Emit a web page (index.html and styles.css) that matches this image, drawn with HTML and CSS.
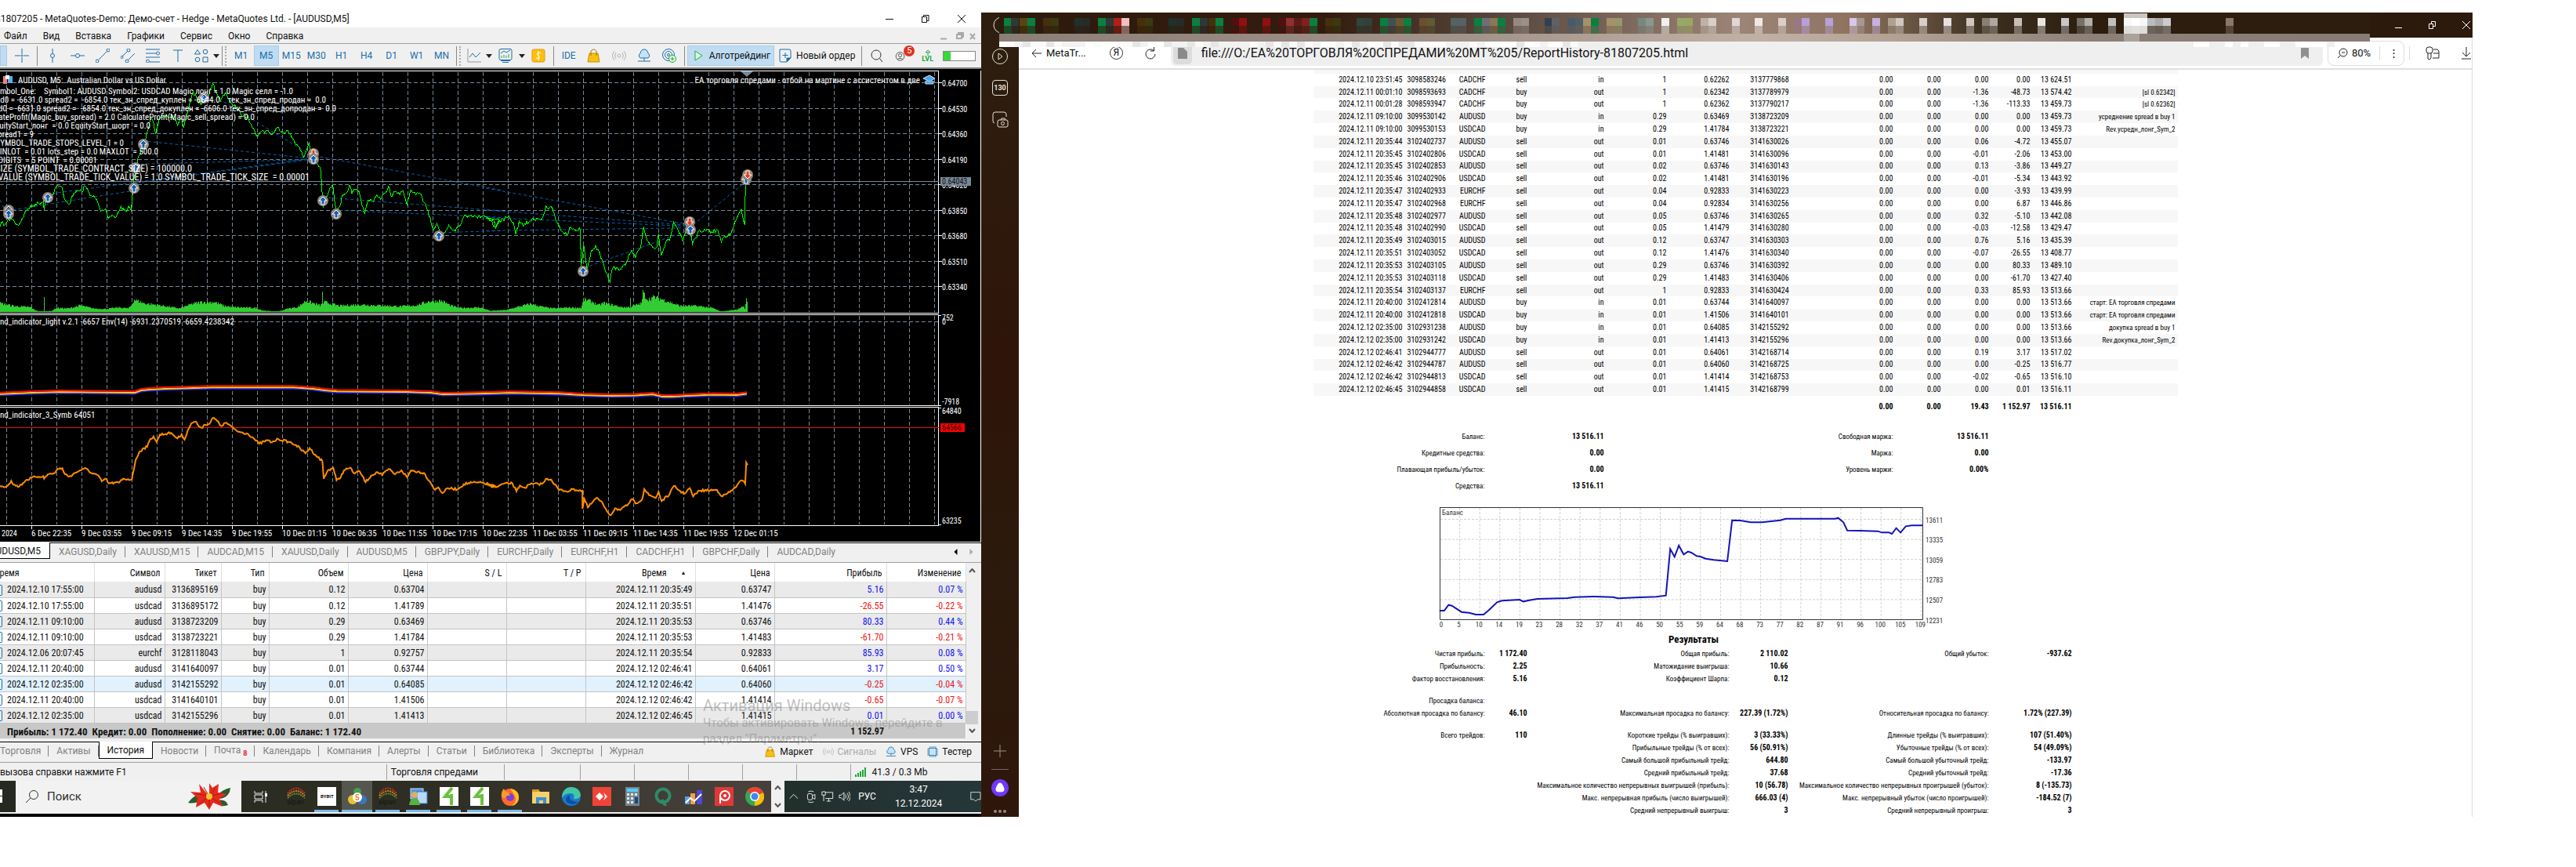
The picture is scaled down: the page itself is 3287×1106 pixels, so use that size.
FILE: index.html
```
<!DOCTYPE html>
<html lang="ru">
<head>
<meta charset="utf-8">
<title>MetaTrader 5</title>
<link rel="stylesheet" href="styles.css">
</head>
<body>
<main class="desktop">
<section class="terminal">
  <header class="titlebar">
    <span class="title">81807205 - MetaQuotes-Demo: Демо-счет - Hedge - MetaQuotes Ltd. - [AUDUSD,M5]</span>
    <div class="wincontrols">
      <button aria-label="Свернуть"><svg width="12" height="12" viewBox="0 0 12 12"><path d="M1 6.5h10"/></svg></button>
      <button aria-label="Окно"><svg width="12" height="12" viewBox="0 0 12 12"><path d="M1.500 3.500h6v7h-6zM3.500 3V1.500h6.500v7H8"/></svg></button>
      <button aria-label="Закрыть"><svg width="12" height="12" viewBox="0 0 12 12"><path d="M1 1l10 10M11 1L1 11"/></svg></button>
    </div>
  </header>
  <nav class="menubar">
    <button>Файл</button><button>Вид</button><button>Вставка</button><button>Графики</button><button>Сервис</button><button>Окно</button><button>Справка</button>
    <svg class="mdi" width="50" height="12" viewBox="0 0 50 12"><path d="M1 9.500h8M22 4h6v5h-6zM24 3.500V2h6v5h-1.500M39 3l6 7M45 3l-6 7"/></svg>
  </nav>
  <div class="toolbar">
    <button class="stub on" aria-label="Курсор"></button>
    <button class="tool" aria-label="Перекрестие"><svg viewBox="0 0 18 18"><path d="M9 0v7M9 11v7M0 9h7M11 9h7"/><circle cx="9" cy="9" r="1"/></svg></button>
    <i class="sep"></i>
    <button class="tool" aria-label="Вертикаль"><svg viewBox="0 0 18 18"><path d="M9 0v6.500M9 11.500V18"/><circle cx="9" cy="9" r="2.500"/></svg></button>
    <button class="tool" aria-label="Горизонталь"><svg viewBox="0 0 18 18"><path d="M0 9h6.500M11.500 9H18"/><circle cx="9" cy="9" r="2.500"/></svg></button>
    <button class="tool" aria-label="Тренд"><svg viewBox="0 0 18 18"><path d="M3.500 14.500l11-11"/><circle cx="2" cy="16" r="2"/><circle cx="16" cy="2" r="2"/></svg></button>
    <button class="tool" aria-label="Канал"><svg viewBox="0 0 18 18"><path d="M2 10l7-7M9 15l9-9"/><circle cx="1.500" cy="11" r="1.500"/><circle cx="10" cy="2" r="2"/><circle cx="8" cy="16" r="2"/></svg></button>
    <button class="tool" aria-label="Фибоначчи"><svg viewBox="0 0 18 18"><path d="M0 1h18M0 6h13M0 11h18M5 17h13"/><circle cx="15.500" cy="6" r="2"/><circle cx="2.500" cy="16" r="2"/></svg></button>
    <button class="tool" aria-label="Текст"><svg viewBox="0 0 18 18"><path d="M3 2h12M9 2v15"/></svg></button>
    <button class="tool narrow" aria-label="Фигуры"><svg viewBox="0 0 18 18"><path d="M4 1.500L7.500 7H.5zM11 11h6v6h-6z"/><circle cx="14" cy="4" r="2.800"/><circle cx="4" cy="14" r="2.800"/></svg></button>
    <i class="caret"></i><i class="sep tight"></i><i class="grip"></i>
    <button class="tool">M1</button><button class="tool on">M5</button><button class="tool">M15</button><button class="tool">M30</button><button class="tool">H1</button><button class="tool">H4</button><button class="tool">D1</button><button class="tool">W1</button><button class="tool">MN</button>
    <i class="sep tight"></i><i class="grip"></i>
    <button class="tool narrow" aria-label="Линия"><svg viewBox="0 0 18 18"><path d="M1 0v17h17" stroke="#999"/><path d="M3 11l4-5 4 5 6-6"/></svg></button><i class="caret"></i>
    <button class="tool" aria-label="Индикаторы"><svg viewBox="0 0 18 18"><rect x="1" y=".5" width="16" height="14" rx="2"/><path d="M3 15.500h12M5 17.500h8M3 6l4-3 3 2 5-3"/><path d="M4 12V9M7 12V8M10 12V9M13 12V7" stroke="#20b040"/></svg></button><i class="caret"></i>
    <button class="tool" aria-label="Доллар"><svg viewBox="0 0 18 18"><rect x="1" y="1" width="16" height="16" rx="2" fill="#fdc010" stroke="#e09a10"/><path d="M12 6C8 4 6 7 9 9s1 5-3 3M9 3v12" stroke="#fff"/></svg></button>
    <i class="sep"></i>
    <button class="tool">IDE</button>
    <button class="tool" aria-label="Маркет"><svg viewBox="0 0 18 18"><path d="M3 6h11l2 11H1z" fill="#f8c010" stroke="#c89000"/><path d="M5 9V3q4-4 7 0v6" stroke="#a87800"/></svg></button>
    <button class="tool" aria-label="Сигналы"><svg viewBox="0 0 18 18"><g stroke="#b5b5b5"><circle cx="9" cy="9" r="2"/><path d="M5 5q-3 4 0 8M13 5q3 4 0 8M3 3q-5 6 0 12M15 3q5 6 0 12"/></g></svg></button>
    <button class="tool" aria-label="VPS"><svg viewBox="0 0 18 18"><path d="M4 12a3.500 3.500 0 0 1 0-6Q5 1 9 1t5 5a3.500 3.500 0 0 1 0 6z" fill="#c4e2fa"/><path d="M9 12v4M1 16h16"/></svg></button>
    <button class="tool" aria-label="Подписка"><svg viewBox="0 0 18 18"><circle cx="8" cy="8" r="7.500"/><circle cx="8" cy="8" r="4.500"/><circle cx="8" cy="8" r="1.500"/><circle cx="13" cy="13" r="4.500" fill="#e8ffe8" stroke="#20a040"/><path d="M13 10.500v5M10.500 13h5" stroke="#20a040"/></svg></button>
    <i class="sep"></i>
    <button class="wide on"><svg viewBox="0 0 18 18"><path d="M5 3l9 6-9 6z" fill="#dfffe0" stroke="#20a840"/></svg>Алготрейдинг</button>
    <button class="wide"><svg viewBox="0 0 18 18"><path d="M2 1h12q2 0 2 2v9l-5 5H4q-2 0-2-2z"/><path d="M9 5v7M5.500 8.500h7"/><path d="M16 12h-5v5z" fill="#1c6ea8"/></svg>Новый ордер</button>
    <i class="sep"></i>
    <button class="tool push" aria-label="Поиск"><svg viewBox="0 0 18 18"><g stroke="#333"><circle cx="8" cy="8" r="6"/><path d="M12.500 12.500L16 17"/></g></svg></button>
    <button class="tool" aria-label="Профиль"><svg viewBox="0 0 22 18"><g stroke="#333"><circle cx="8" cy="10" r="6.500"/><circle cx="8" cy="8.500" r="2.500"/><path d="M4 15q4-4 8 0"/></g></svg><span class="badge">5</span></button>
    <button class="lvl"><svg viewBox="0 0 10 8"><path d="M5 8V4H2l3-3 3 3H5" stroke="#20a840"/></svg>LVL</button>
    <div class="meter"><i></i></div>
  </div>
  <svg class="chart" viewBox="0 88 1252 604" id="chart">
    <rect x="0" y="88" width="1252" height="604" fill="#000"/>
    <g id="grid" class="dash"></g>
    <path class="dash" d="M288 410.500H1198"/>
    <g id="volume" fill="#32cd32"></g>
    <g class="frame"><path d="M0 90.500H1197.500V399.500H0M0 401.500H1197.500V517.500H0M0 519.500H1197.500V670.500H0M1251 90V691M0 691H1252"/><path id="ticks" d=""/></g>
    <path d="M609 91h16l-8 7z" transform="translate(336 0)" fill="#778899"/>
    <path d="M0 231.500H1198" stroke="#778899"/>
    <path d="M0 545.500H1198" stroke="#e01010"/>
    <g class="deals" transform="scale(.40816 .33333)"><path d="M0 765L20 815M40 803L440 725M165 740L981 605M425 700L981 608M440 628L981 610M462 541L960 605M650 378L700 390L981 600M1010 755L1568 807M1060 805L1568 832M1385 890L1568 883M1000 600L1568 728"/></g>
    <g class="deals" transform="translate(620 0) scale(.43366 .33333)"><path d="M0 720L600 860M0 804L600 862M0 832L600 866M0 883L600 872M290 1025L600 880M610 860L765 695"/></g>
    <path id="price" fill="none" stroke="#00ff00" shape-rendering="crispEdges"/>
    <path id="osc" fill="none" stroke="#ff8c00" stroke-width="2"/>
    <g fill="none" stroke-width="2" id="env"></g>
    <g id="marks"></g>
    <g id="labels" class="ctext"></g>
    <g><rect x="4" y="97" width="5" height="10" fill="#f08080"/><rect x="10" y="97" width="6" height="9" fill="#58b0f0"/><rect x="7" y="96" width="5" height="5" fill="#fff"/></g>
    <path d="M1178 100l8-4 7 4-7 4zM1181 103v4h10v-4" fill="#4fa8e8" stroke="#cfe8ff"/>
  </svg>
  <div class="charttabs">
    <button class="active">AUDUSD,M5</button><button>XAGUSD,Daily</button><button>XAUUSD,M15</button><button>AUDCAD,M15</button><button>XAUUSD,Daily</button><button>AUDUSD,M5</button><button>GBPJPY,Daily</button><button>EURCHF,Daily</button><button>EURCHF,H1</button><button>CADCHF,H1</button><button>GBPCHF,Daily</button><button class="last">AUDCAD,Daily</button>
    <svg width="26" height="10" viewBox="0 0 26 10"><path d="M5 1v8L1 5z" fill="#000"/><path d="M21 1v8l4-4z" fill="#aaa"/></svg>
  </div>
  <div class="history">
    <div class="hbody">
      <table class="trades">
        <colgroup><col style="width:120px"><col style="width:90px"><col style="width:72px"><col style="width:61px"><col style="width:101px"><col style="width:101px"><col style="width:101px"><col style="width:101px"><col style="width:140px"><col style="width:101px"><col style="width:143px"><col style="width:101px"></colgroup>
        <thead><tr><th class="first">Время</th><th>Символ</th><th>Тикет</th><th>Тип</th><th>Объем</th><th>Цена</th><th>S / L</th><th>T / P</th><th>Время<span class="sort">▲</span></th><th>Цена</th><th>Прибыль</th><th>Изменение</th></tr></thead>
        <tbody id="trades"></tbody>
        <tfoot><tr><td colspan="10" class="sum">Прибыль: 1 172.40&nbsp; Кредит: 0.00&nbsp; Пополнение: 0.00&nbsp; Снятие: 0.00&nbsp; Баланс: 1 172.40</td><td>1 152.97</td><td></td></tr></tfoot>
      </table>
      <div class="scroll"><svg width="9" height="6" viewBox="0 0 9 6"><path d="M1 5l3.500-4L8 5"/></svg><i></i><svg width="9" height="6" viewBox="0 0 9 6"><path d="M1 1l3.500 4L8 1"/></svg></div>
    </div>
    <div class="watermark"><b>Активация Windows</b>Чтобы активировать Windows, перейдите в<br>раздел "Параметры".</div>
  </div>
  <div class="toolboxtabs">
    <button class="nosep">Торговля</button><button>Активы</button><button class="active">История</button><button>Новости</button><button>Почта<sub>8</sub></button><button>Календарь</button><button>Компания</button><button>Алерты</button><button>Статьи</button><button>Библиотека</button><button>Эксперты</button><button class="last">Журнал</button>
    <div class="services">
      <a href="#"><svg viewBox="0 0 18 18"><path d="M3 6h11l2 11H1z" fill="#f8c010" stroke="#c89000"/><path d="M5 9V3q4-4 7 0v6" stroke="#a87800"/></svg>Маркет</a>
      <a href="#" class="off"><svg viewBox="0 0 18 18"><g stroke="#b5b5b5"><circle cx="9" cy="9" r="2"/><path d="M5 5q-3 4 0 8M13 5q3 4 0 8M3 3q-5 6 0 12M15 3q5 6 0 12"/></g></svg>Сигналы</a>
      <a href="#"><svg viewBox="0 0 18 18"><path d="M4 12a3.500 3.500 0 0 1 0-6Q5 1 9 1t5 5a3.500 3.500 0 0 1 0 6z" fill="#c4e2fa"/><path d="M9 12v4M1 16h16"/></svg>VPS</a>
      <a href="#"><svg viewBox="0 0 18 18"><rect x="3" y="3" width="12" height="12" fill="#c4e2fa"/><path d="M5 0v3M8 0v3M11 0v3M14 0v3M5 15v3M8 15v3M11 15v3M14 15v3M0 5h3M0 8h3M0 11h3M0 14h3M15 5h3M15 8h3M15 11h3M15 14h3"/></svg>Тестер</a>
    </div>
  </div>
  <footer class="status"><span class="s1">вызова справки нажмите F1</span><span class="s2">Торговля спредами</span><span class="s3"></span><span class="s4"></span><span class="s4"></span><span class="s4"></span><span class="s4"></span><span class="s4"></span><span class="s5"><svg width="15" height="12" viewBox="0 0 15 12"><path d="M1 12V9M4 12V7M7 12V5M10 12V3M13 12V0" stroke="#18a838" stroke-width="2"/></svg>41.3 / 0.3 Mb</span></footer>
  <div class="taskbar">
    <button class="start" aria-label="Пуск"><svg width="20" height="18" viewBox="0 0 20 18"><path d="M0 0h9v8H0zM10 0h9v8h-9zM0 9h9v8H0zM10 9h9v8h-9z" fill="#fff"/></svg></button>
    <label class="search"><svg width="18" height="18" viewBox="0 0 18 18"><circle cx="11" cy="7" r="5.500"/><path d="M7 11l-6 6"/></svg><input placeholder="Поиск" aria-label="Поиск">
      <svg class="flower" width="54" height="34" viewBox="0 0 54 34"><path d="M16 15Q8 14 0 25q10 2 18-4zM38 15Q44 8 54 6q-1 12-13 14zM38 22q10-2 13 6-8 3-14-2z" fill="#2f5a30"/><path d="M27 17L14 1l2 11L3 11l9 8-2 12 11-6 6 9 5-9 12 5-4-10 9-6-11-2 1-11-8 5-4-6z" fill="#e62a1c"/><path d="M27 17L20 5M27 17l8-11M27 17L9 13M27 17l-14 10M27 17l14 9M27 17l15-4M27 17v13" stroke="#b01810"/><circle cx="27" cy="17" r="4" fill="#f0c830"/></svg></label>
    <div class="apps">
      <button class="tv" aria-label="Задачи"><svg viewBox="0 0 24 24"><path d="M5 5v3h10V5M5 10h10v5H5zM5 20v-3h10v3M19 5v3M19 12v8" stroke="#eee"/><rect x="18" y="8" width="3" height="4" fill="#fff"/></svg></button>
      <button aria-label="Alpari"><svg viewBox="0 0 24 24"><g fill="none" stroke-width="2" stroke-dasharray="2 1"><path d="M1 8Q12-5 23 8" stroke="#c83020"/><path d="M1 11Q12-1 23 11" stroke="#d88020"/><path d="M1 14Q12 3 23 14" stroke="#609028"/></g><text x="0" y="22" font-size="9" fill="#15150f">alpari</text></svg></button>
      <button class="run" aria-label="Bybit"><svg viewBox="0 0 24 24"><rect width="24" height="24" fill="#fff"/><text x="4" y="14" font-size="6" font-weight="bold" fill="#111">BYBIT</text></svg></button>
      <button class="run cur" aria-label="MetaTrader"><svg viewBox="0 0 24 24"><circle cx="12" cy="6" r="5" fill="#40a050"/><circle cx="6" cy="16" r="6" fill="#e8c038"/><circle cx="18" cy="16" r="6" fill="#3878c0"/><circle cx="12" cy="13" r="6" fill="#fff"/><text x="9" y="17" font-size="10" font-weight="bold" fill="#f08020">5</text></svg></button>
      <button class="run" aria-label="Alpari 2"><svg viewBox="0 0 24 24"><g fill="none" stroke-width="2" stroke-dasharray="2 1"><path d="M1 8Q12-5 23 8" stroke="#c83020"/><path d="M1 11Q12-1 23 11" stroke="#d88020"/><path d="M1 14Q12 3 23 14" stroke="#609028"/></g><text x="0" y="22" font-size="9" fill="#15150f">alpari</text></svg></button>
      <button class="run" aria-label="Контакты"><svg viewBox="0 0 24 24"><rect x="2" y="2" width="16" height="13" fill="#4f98e0" stroke="#cfe4fa"/><rect x="10" y="6" width="13" height="15" fill="#b8d8f8" stroke="#3878c8"/><circle cx="7" cy="10" r="4" fill="#e8a868"/><path d="M0 23q1-9 7-9t7 9z" fill="#58b048"/></svg></button>
      <button class="run" aria-label="4"><svg viewBox="0 0 24 24"><rect width="24" height="24" fill="#fff"/><path d="M16 1L7 12h8M15 9v14" fill="none" stroke="#6cc040" stroke-width="4"/></svg></button>
      <button class="run" aria-label="4b"><svg viewBox="0 0 24 24"><rect width="24" height="24" fill="#fff"/><path d="M16 1L7 12h8M15 9v14" fill="none" stroke="#6cc040" stroke-width="4"/></svg></button>
      <button class="run" aria-label="Firefox"><svg viewBox="0 0 24 24"><circle cx="12" cy="13" r="11" fill="#ff6a2a"/><path d="M12 2q11 2 11 11t-9 11q8-6 4-12-2-5-6-10z" fill="#ffc02a"/><circle cx="12" cy="13" r="5" fill="#7a40d8"/><path d="M1 13Q0 6 4 2l2 4q4 0 6 5-5-1-6 3z" fill="#ff9a2a"/></svg></button>
      <button aria-label="Проводник"><svg viewBox="0 0 24 24"><path d="M1 3h8l2 3h12v15H1z" fill="#f8d068"/><path d="M1 3h8l2 3H1z" fill="#d89a20"/><path d="M6 21v-8h13v8h-4v-4h-5v4z" fill="#3a90e0"/></svg></button>
      <button aria-label="Edge"><svg viewBox="0 0 24 24"><circle cx="12" cy="12" r="12" fill="#1a78d0"/><path d="M0 12Q2 0 12 0t12 10q-1 6-9 5 2-7-4-7-8 0-11 6z" fill="#40c8a0"/><path d="M10 10q-2 9 11 9-8 6-15 0-3-6 4-9z" fill="#0c509c"/></svg></button>
      <button aria-label="AnyDesk"><svg viewBox="0 0 24 24"><rect width="24" height="24" fill="#f04438"/><path d="M9 7l5 5-5 5-5-5zM14 7l5 5-5 5 2-5z" fill="#fff"/></svg></button>
      <button aria-label="Калькулятор"><svg viewBox="0 0 24 24"><rect x="3" width="18" height="24" fill="#78848c"/><rect x="5" y="2" width="14" height="4" fill="#50d0f8"/><path d="M5 8h3v3H5zM10 8h3v3h-3zM15 8h3v3h-3zM5 13h3v3H5zM10 13h3v3h-3zM5 18h3v3H5zM10 18h3v3h-3z" fill="#e0e8ee"/><path d="M15 13h4v8h-4z" fill="#104888"/></svg></button>
      <button aria-label="Q"><svg viewBox="0 0 24 24"><circle cx="12" cy="11" r="8.500" fill="none" stroke="#2f8a68" stroke-width="4"/><path d="M12 15l5 9h-4l-4-7z" fill="#2f8a68"/></svg></button>
      <button aria-label="График"><svg viewBox="0 0 24 24"><path d="M1 12h6v10H1z" fill="#58a0e0"/><path d="M8 8h6v14H8z" fill="#f0a050"/><path d="M16 4h7v18h-7z" fill="#5048d8"/><path d="M2 20l6-6 5 4 9-9" stroke="#fff" stroke-width="2" fill="none"/></svg></button>
      <button aria-label="P"><svg viewBox="0 0 24 24"><rect width="24" height="24" fill="#e03838"/><circle cx="13" cy="11" r="6" fill="none" stroke="#fff" stroke-width="2"/><circle cx="13" cy="11" r="2" fill="#fff"/><path d="M7 11v10" stroke="#fff" stroke-width="2"/></svg></button>
      <button aria-label="Chrome"><svg viewBox="0 0 24 24"><circle cx="12" cy="12" r="12" fill="#34a853"/><path d="M12 12L2 5q4-5 10-5 8 0 11 7z" fill="#ea4335"/><path d="M12 12l11-5q3 9-3 14-4 3-8 3z" fill="#fbbc05"/><circle cx="12" cy="12" r="6" fill="#fff"/><circle cx="12" cy="12" r="4.500" fill="#4285f4"/></svg></button>
    </div>
    <div class="updown"><svg width="9" height="6" viewBox="0 0 9 6"><path d="M1 5l3.500-4L8 5"/></svg><svg width="9" height="6" viewBox="0 0 9 6"><path d="M1 1l3.500 4L8 1"/></svg></div>
    <div class="tray">
      <svg viewBox="0 0 18 18"><path d="M3 12l6-6 6 6"/></svg>
      <svg viewBox="0 0 18 18"><rect x="4" y="5" width="7" height="9" rx="2"/><path d="M11 8l4-2v7l-4-2M5 2q4-2 8 0M5 17q4 2 8 0"/></svg>
      <svg viewBox="0 0 18 18"><path d="M6 3h11v9H6M1 2h5v5H1zM3.500 7v9M11 12v4M8 16h6"/></svg>
      <svg viewBox="0 0 18 18"><path d="M1 7h3l4-4v12l-4-4H1zM10 6q2 3 0 6M12.500 4q4 5 0 10M15 2q5 7 0 14"/></svg>
      <span>РУС</span><time>3:47<br>12.12.2024</time>
      <svg viewBox="0 0 18 18"><path d="M1 2h16v12h-5l-3 3-3-3H1z"/></svg>
    </div>
  </div>
</section>

<aside class="sidebar">
  <button aria-label="Алиса"><svg viewBox="0 0 22 22"><circle cx="13" cy="11" r="10"/></svg></button>
  <button aria-label="Плеер"><svg viewBox="0 0 22 22"><circle cx="11" cy="11" r="9.500"/><path d="M9 7l5 4-5 4z"/></svg></button>
  <button class="count">130</button>
  <button aria-label="Снимок"><svg viewBox="0 0 22 22"><path d="M4 16q-2 0-2-3V5q0-3 3-3h11q3 0 3 3v3"/><rect x="8" y="12" width="13" height="9" rx="2"/><path d="M12 12l1-2h4l1 2"/><circle cx="14.500" cy="16.500" r="2"/></svg></button>
  <div class="grow"></div>
  <button aria-label="Добавить" class="dim"><svg viewBox="0 0 22 22"><path d="M11 3v16M3 11h16"/></svg></button>
  <i class="rule"></i>
  <button aria-label="Помощник" class="alice"><svg viewBox="0 0 24 24"><circle cx="12" cy="12" r="12" fill="#7038f8" stroke="none"/><path d="M12 5q3 0 6 8 1 5-6 5t-6-5q3-8 6-8z" fill="#fff" stroke="none"/></svg></button>
  <button aria-label="Ещё" class="more"><svg viewBox="0 0 22 6"><g fill="#8f8a86" stroke="none"><circle cx="5" cy="3" r="2"/><circle cx="11" cy="3" r="2"/><circle cx="17" cy="3" r="2"/></g></svg></button>
</aside>

<section class="browser">
  <header class="browsertop">
    <div class="wincontrols light">
      <button aria-label="Свернуть окно"><svg width="12" height="12" viewBox="0 0 12 12"><path d="M1 9.500h9"/></svg></button>
      <button aria-label="Восстановить"><svg width="12" height="12" viewBox="0 0 12 12"><path d="M1.500 4.500h5v6h-5zM4.500 4V1.500h5v6H7"/></svg></button>
      <button aria-label="Закрыть окно"><svg width="12" height="12" viewBox="0 0 12 12"><path d="M1 1l10 10M11 1L1 11"/></svg></button>
    </div>
  </header>
  <svg class="mosaic" viewBox="1275 16 1750 44" preserveAspectRatio="none" id="mosaic" shape-rendering="crispEdges">
    <defs><linearGradient id="mg"><stop offset="0" stop-color="#2c1a0c"/><stop offset=".24" stop-color="#331c0f"/><stop offset=".38" stop-color="#5d4c42"/><stop offset=".54" stop-color="#9c8577"/><stop offset=".62" stop-color="#8f7360"/><stop offset=".72" stop-color="#3c2f20"/><stop offset=".8" stop-color="#2c1d0e"/><stop offset="1" stop-color="#2c1d0e"/></linearGradient>
    <linearGradient id="ms"><stop offset="0" stop-color="#8a7e77"/><stop offset=".35" stop-color="#a3948a"/><stop offset=".55" stop-color="#c1b0a6"/><stop offset=".65" stop-color="#b3a294"/><stop offset=".8" stop-color="#8c8077"/><stop offset="1" stop-color="#887a76"/></linearGradient></defs>
    <rect x="1275" y="16" width="1750" height="27" fill="url(#mg)"/>
    <rect x="1275" y="43" width="1750" height="10" fill="url(#ms)"/>
  </svg>
  <div class="addressbar">
    <button class="back"><svg width="14" height="14" viewBox="0 0 14 14"><path d="M13 7H1M6 2L1 7l5 5"/></svg>MetaTr...</button>
    <button class="ya"><span>Я</span></button>
    <button class="reload" aria-label="Обновить"><svg width="16" height="16" viewBox="0 0 16 16"><path d="M12 4.500a6 6 0 1 0 2 4.500M12.500 0v5H8"/></svg></button>
    <label class="url"><i><svg width="12" height="14" viewBox="0 0 12 14"><path d="M0 0h7l5 5v9H0z" fill="#8a8a8a" stroke="none"/></svg></i><input value="file:///O:/EA%20ТОРГОВЛЯ%20СПРЕДАМИ%20MT%205/ReportHistory-81807205.html" aria-label="Адрес"><svg width="10" height="14" viewBox="0 0 10 14"><path d="M0 0h10v14l-5-4-5 4z" fill="#909090" stroke="none"/></svg></label>
    <div class="zoom"><svg width="14" height="14" viewBox="0 0 14 14"><circle cx="8" cy="6" r="5"/><path d="M4.500 9.500L1 13M6 6h4"/></svg>80%<i></i><span>⋮</span></div>
    <i class="vline"></i>
    <button aria-label="Пароли"><svg width="18" height="18" viewBox="0 0 18 18"><rect x="1" y="1" width="8" height="8" rx="3"/><path d="M3 9v7l2 1 2-2V9M10 4h5l2 2v9H9M10 9h7"/></svg></button>
    <button class="dl" aria-label="Загрузки"><svg width="14" height="16" viewBox="0 0 14 16"><path d="M7 0v12M2 7l5 5 5-5M1 15h12"/></svg></button>
  </div>
  <article class="page">
    <div class="report">
      <table class="deals-table"><colgroup id="cols"></colgroup><tbody id="deals"></tbody></table>
      <table class="totals"><colgroup id="cols2"></colgroup><tbody><tr><td colspan="8"></td><td>0.00</td><td>0.00</td><td>19.43</td><td>1 152.97</td><td>13 516.11</td><td></td></tr></tbody></table>
      <table class="account"><colgroup><col style="width:222px"><col style="width:152px"><col style="width:369px"><col style="width:122px"><col style="width:238px"></colgroup><tbody>
        <tr><td>Баланс:</td><th>13 516.11</th><td>Свободная маржа:</td><th>13 516.11</th><td></td></tr>
        <tr><td>Кредитные средства:</td><th>0.00</th><td>Маржа:</td><th>0.00</th><td></td></tr>
        <tr><td>Плавающая прибыль/убыток:</td><th>0.00</th><td>Уровень маржи:</td><th>0.00%</th><td></td></tr>
        <tr><td>Средства:</td><th>13 516.11</th><td></td><th></th><td></td></tr></tbody></table>
      <svg class="balance" viewBox="1676 640 1103 164" id="balance">
        <g id="bgrid" stroke="#d0d0d0" stroke-dasharray="3 2"></g>
        <path d="M1837 646.500H2453.500V789.500H1837.500V646" fill="none" stroke="#333"/>
        <g transform="translate(1740 630) scale(.61224 .33333)"><polyline fill="none" stroke="#1414b8" stroke-width="2" vector-effect="non-scaling-stroke" points="158,444 168,444 177,422 184,425 204,449 220,452 234,459 250,459 262,440 278,412 288,406 325,402 333,409 345,404 362,399 425,396 440,392 480,390 520,392 530,397 575,393 610,391 630,386 639,208 648,238 657,195 667,229 676,218 683,222 694,235 702,237 713,245 730,250 758,255 768,98 785,99 807,106 830,106 868,98 880,92 983,92 989,89 1000,106 1008,137 1035,138 1072,140 1080,145 1095,145 1101,150 1110,128 1119,145 1130,121 1142,118 1166,118"/></g>
        <text x="1840" y="656">Баланс</text>
        <g id="blabels"></g>
      </svg>
      <h2>Результаты</h2>
      <table class="results"><colgroup><col style="width:222px"><col style="width:54px"><col style="width:258px"><col style="width:75px"><col style="width:256px"><col style="width:106px"><col style="width:132px"></colgroup><tbody id="results"></tbody></table>
    </div>
  </article>
</section>
</main>
<script src="app.js"></script>
</body>
</html>
```
FILE: styles.css
```
*{box-sizing:border-box}
body{margin:0;background:#fff;color:#111;font:12px/16px Roboto,"Noto Sans",sans-serif}
button{border:0;background:none;padding:0;margin:0;font:inherit;color:inherit;white-space:nowrap}
input{border:0;background:none;padding:0;font:inherit;color:inherit;min-width:0}
svg{display:block;fill:none;stroke:none}
table{border-collapse:collapse;table-layout:fixed;width:100%}
.desktop{display:grid;grid-template-columns:1252fr 48px 1855fr 132px;overflow:hidden}
.terminal{min-width:0;overflow:hidden;background:#f0f0f0;border-bottom:4px solid #000}
.titlebar{display:flex;align-items:center;justify-content:space-between;background:#fff;height:35px;padding-top:13px}
.title{margin-left:-6px;white-space:nowrap}
.wincontrols{display:flex;gap:34px;padding-right:19px}
.wincontrols svg{stroke:#111}
.wincontrols.light{padding-right:2px;gap:31px}
.wincontrols.light svg{stroke:#fff}
.menubar{display:flex;align-items:center;gap:20px;height:20px;padding:1px 0 0 5px}
.mdi{margin-left:auto;margin-right:3px;stroke:#a8a8a8;stroke-width:2}
.toolbar{display:flex;align-items:center;height:33px;border-top:1px solid #a0a0a0;border-bottom:2px solid #808080;color:#1c6ea8;overflow:hidden}
.toolbar svg{width:18px;height:18px;stroke:#1c6ea8;flex:none}
.tool{width:32px;height:26px;flex:none;display:flex;align-items:center;justify-content:center;position:relative}
.tool.narrow{width:28px}
.stub{width:9px;height:26px;margin-right:3px}
.on{background:#bfdcf3;outline:1px solid #a5cdea;outline-offset:-1px}
.sep{width:1px;height:25px;background:#888;margin:0 3px;flex:none}
.sep.tight{margin:0 2px}
.grip{width:2px;height:25px;border-left:2px dotted #aaa;margin:0 3px 0 1px;flex:none}
.caret{border:4px solid transparent;border-top:5px solid #222;border-bottom:0;margin:0 1px;flex:none}
.wide{display:flex;align-items:center;gap:5px;height:26px;padding:0 5px;color:#111}
.push{margin-left:auto}
.badge{position:absolute;right:0;top:0;width:14px;height:14px;border-radius:7px;background:#e03020;color:#fff;font-size:11px;line-height:14px}
.lvl{width:34px;font-size:9px;line-height:9px;font-weight:bold;color:#20a840;display:flex;flex-direction:column;align-items:center}
.lvl svg{width:10px;height:8px}
.meter{width:42px;height:13px;border:1px solid #888;background:#fff;margin:0 7px 0 3px;flex:none}
.meter i{display:block;width:9px;height:11px;background:#38d838}
.chart{width:100%;height:auto}
.dash{stroke:#778899;stroke-dasharray:5 3;shape-rendering:crispEdges}
.frame path{stroke:#fff;shape-rendering:crispEdges}
.deals path{stroke:#0a5ea8;stroke-dasharray:4 3;vector-effect:non-scaling-stroke}
.ctext text{fill:#fff;font:11px "Roboto Condensed",Roboto,sans-serif;white-space:pre}
.ctext .small{font-size:10px}
.ctext .large{font-size:12px}
.ctext .ink{fill:#111}
.charttabs{display:flex;height:26px;color:#808080;padding-bottom:4px;border-bottom:1px solid #a0a0a0}
.charttabs button{padding:2px 11px 0;border-top:1px solid #000;position:relative}
.charttabs button:not(.active):not(.last)::after,.toolboxtabs button:not(.active):not(.nosep):not(.last)::after,.nosep::after{content:"";position:absolute;right:0;top:4px;height:14px;border-right:1px solid #808080}
.charttabs .active{width:64px;display:flex;justify-content:flex-end;align-items:center;background:#fff;color:#111;border:1px solid #000;border-width:0 1px 1px 0}
.charttabs .last{flex:1;text-align:left}
.charttabs svg{width:37px;height:21px;padding:6px 8px 4px 0;border-top:1px solid #000}
.history{position:relative;background:#f0f0f0;padding-bottom:4px}
.hbody{display:flex;padding-right:3px}
.trades{flex:1;font:12px/17px "Roboto Condensed",Roboto,sans-serif;background:#fff}
.trades th{font-weight:400;height:24px;padding:2px 5px 0 0;text-align:right;border-right:1px solid #e0e0e0}
.trades td{height:20px;padding:2px 3px 0 0;text-align:right;border-right:1px solid #c4c4c4;border-bottom:1px solid #c4c4c4;white-space:nowrap}
.trades th.first{text-align:left;text-indent:-7px}
.trades tbody td:first-child{text-align:left;padding-left:0}
.doc{display:inline-block;width:3px;height:14px;border:1px solid #1c6ea8;border-left:0;border-radius:0 2px 2px 0;margin-right:6px;vertical-align:middle}
.trades tbody tr:nth-child(odd){background:#eaeaea}
.trades tbody tr:nth-child(7){background:#e1f1fd}
.trades tfoot td{background:#c8c8c8;border:0;font-weight:bold}
.trades tfoot .sum{text-align:left;padding-left:9px;font-size:13px}
.sort{font-size:7px;line-height:7px;margin:0 6px 0 18px;vertical-align:middle}
.pos{color:#1414f0}.neg{color:#f01414}
.scroll{width:17px;display:flex;flex-direction:column;align-items:center;padding:7px 0;background:#f0f0f0}
.scroll svg,.updown svg{stroke:#555;stroke-width:2}
.scroll i{width:15px;height:17px;background:#cdcdcd;margin:auto 0 5px}
.watermark{position:absolute;right:50px;top:170px;width:305px;font:15px/20px Roboto,sans-serif;color:rgba(130,130,130,.5);white-space:nowrap}
.watermark b{display:block;font-weight:400;font-size:20px;line-height:24px}
.toolboxtabs{display:flex;height:27px;border-top:1px solid #000;border-bottom:1px solid #a0a0a0;color:#808080;padding-bottom:4px}
.toolboxtabs button{padding:0 10px;position:relative}
.toolboxtabs .nosep{padding-left:0}
.toolboxtabs .active{background:#fff;color:#111;border:1px solid #000;border-top:0;margin-top:-1px}
.toolboxtabs sub{color:#f02020;font-size:9px;font-weight:bold;line-height:9px;margin-left:3px}
.services{display:flex;gap:12px;margin-left:auto;padding:2px 12px 0 0;align-items:center}
.services a{display:flex;gap:5px;align-items:center;color:#111;text-decoration:none}
.services .off{color:#aaa}
.services svg{width:14px;height:14px;stroke:#1c6ea8}
.status{display:flex;height:23px;padding:2px 0 1px}
.status span{border-right:1px solid #a0a0a0;white-space:nowrap;line-height:20px;overflow:hidden}
.s1{flex:500}.s2{flex:146;padding-left:5px}.s3{flex:98}.s4{flex:69}.status .s5{flex:163;border:0;padding-left:5px;display:flex;gap:6px;align-items:center}
.taskbar{display:flex;height:40px;background:linear-gradient(90deg,#26291f,#2e2e24 45%,#48413c 75%,#3c3835)}
.start{width:20px;overflow:hidden;display:flex;align-items:center;justify-content:flex-end;padding-right:16px}
.start svg{flex:none}
.search{display:flex;align-items:center;width:288px;background:#f2f2f2;padding:0 14px 0 12px;gap:10px;font-size:15px;color:#333}
.search svg{stroke:#333;flex:none}
.search .flower{stroke:none}
.search input{flex:1}
.search input::placeholder{color:#333;opacity:1}
.apps{display:flex;flex:1;min-width:0}
.apps button{width:39px;height:40px;display:flex;align-items:center;justify-content:center;flex:none}
.apps .tv{margin:0 7px 0 4px}
.apps svg{width:24px;height:24px;font-family:Roboto,sans-serif}
.run{border-bottom:3px solid #76b9ed;padding-top:3px}
.apps .run{width:31px;margin:0 4px;border-bottom:3px solid #76b9ed;padding-top:3px}
.apps .cur{width:39px;margin:0;background:#55574e}
.updown{width:17px;background:#f0f0f0;display:flex;flex-direction:column;align-items:center;justify-content:space-between;padding:6px 0}
.tray{width:251px;display:flex;align-items:center;gap:6px;background:linear-gradient(90deg,#22302c,#26373a);color:#fff;padding-left:4px}
.tray svg{width:18px;height:18px;stroke:#fff}
.tray svg:last-child{width:16px;margin-left:30px}
.tray span{margin:0 0 0 4px}
.tray time{text-align:center;line-height:18px;margin-left:18px}
.sidebar{margin-top:16px;background:linear-gradient(#2d1f10,#2f1409 45%,#2b1a0d 70%,#2f160b);display:flex;flex-direction:column;align-items:center;padding:5px 0 2px}
.sidebar button{height:22px;margin-bottom:18px;display:flex;align-items:center;color:#e8e0d8}
.sidebar svg{width:22px;height:22px;stroke:#e8e0d8}
.sidebar .count{border:1px solid #e8e0d8;border-radius:4px;width:20px;height:20px;font-size:9px;font-weight:bold;justify-content:center;margin:1px 0 19px}
.sidebar .dim{margin-bottom:12px;opacity:.6}
.grow{flex:1}
.rule{width:22px;border-top:1px solid #75685f;margin-bottom:12px}
.sidebar .alice{margin-bottom:16px}
.sidebar .more{height:6px;margin:0 0 2px}
.sidebar .more svg{height:6px}
.browser{position:relative;margin-top:16px;min-width:0;border-right:1px solid #ddd;display:flex;flex-direction:column}
.browsertop{height:32px;background:#2c1a0d;display:flex;align-items:center;justify-content:flex-end;margin-right:-1px}
.mosaic{position:absolute;left:-25px;top:0;width:calc(94% + 6px);height:44px}
.addressbar{display:flex;align-items:center;height:41px;padding:3px 0 3px 16px;border-bottom:2px solid #e0e0e0}
.addressbar svg{stroke:#222;flex:none}
.back{display:flex;align-items:center;gap:5px;font-size:13px}
.ya{margin-left:30px}
.ya span{display:block;width:17px;height:17px;border:1px solid #333;border-radius:9px;line-height:15px;text-align:center}
.reload{margin:0 18px 0 27px}
.url{flex:1;display:flex;align-items:center;background:#efefef;border-radius:6px;height:32px;padding:0 18px 0 3px;gap:12px;font-size:16px;margin-right:6px}
.url i{width:24px;height:28px;border-radius:5px;background:#dcdcdc;display:flex;align-items:center;justify-content:center}
.url input{flex:1;height:24px}
.zoom{display:flex;align-items:center;gap:5px;width:98px;height:32px;border:1px solid #ddd;border-radius:8px;padding-left:11px;font-size:13px}
.zoom i,.vline{width:1px;height:18px;background:#ddd;margin:0 6px}
.addressbar .dl{margin:0 0 0 27px}
.vline{margin:0 20px 0 6px}
.page{overflow:hidden}
.report{width:1103px;max-width:100%;margin:0 auto;font:10px/12px "Roboto Condensed",Roboto,sans-serif;color:#000}
.deals-table{height:427px;margin-top:-11px}
.deals-table td,.totals td,.account td,.account th,.results td,.results th{padding:0 3px;text-align:right;white-space:nowrap}
.deals-table tr:nth-child(odd){background:#f7f7f7}
.deals-table td:nth-child(4),.deals-table td:nth-child(8){text-align:center}
.deals-table td:nth-child(14){font-size:9px}
.totals td{height:28px;font-weight:bold;padding-left:0}
.totals{margin-bottom:13px}
.account tr{height:21px}
.account td,.results td{font-size:9px}
.balance{width:100%;height:auto;margin-top:11px}
.balance text{font-size:9px;fill:#333}
.report h2{margin:4px 132px 3px 0;font-size:13px;line-height:14px;text-align:center}
.results tr{height:16px}
.results .gap{height:12px}
```
FILE: app.js
```
const $ = id => document.getElementById(id);
let seed = 7;
const rnd = () => (seed = (seed * 16807) % 2147483647) / 2147483647;
const left = ([x, y], top) => [x / 2.45, top + y / 3];
const right = ([x, y], top) => [620 + x / 2.306, top + y / 3];
const pairs = s => s.trim().split(' ').map(p => p.split(',').map(Number));

// Turns a coarse series into a path with tick noise between its points
function noisy(a, b, top, amp) {
  const pts = pairs(a).map(p => left(p, top)).concat(pairs(b).map(p => right(p, top)));
  let d = 'M' + pts[0];
  for (let i = 1; i < pts.length; i++) {
    const [x0, y0] = pts[i - 1], [x1, y1] = pts[i], n = Math.max(1, Math.round((x1 - x0) / 1.5));
    for (let k = 1; k <= n; k++) {
      const t = k / n, j = k < n ? (rnd() - .5) * amp : 0;
      d += 'L' + (x0 + (x1 - x0) * t).toFixed(1) + ' ' + (y0 + (y1 - y0) * t + j).toFixed(1);
    }
  }
  return d;
}
$('price').setAttribute('d', noisy(
 '0,868 8,848 14,862 22,850 34,835 45,848 58,862 70,835 85,800 110,782 135,772 138,803 142,765 160,765 172,720 185,712 193,715 200,755 216,782 228,748 240,730 256,733 266,712 285,748 300,760 315,808 330,800 337,832 350,822 362,832 378,790 395,810 402,790 410,806 415,735 418,690 424,660 432,600 440,580 450,560 462,500 472,455 480,470 487,512 498,455 520,440 540,445 555,480 568,455 574,490 582,450 592,400 604,350 615,375 628,400 638,385 650,370 665,318 675,350 690,385 705,355 715,380 730,405 745,420 760,445 775,445 785,475 803,520 815,505 835,498 850,515 868,488 885,505 897,498 915,530 932,560 950,602 966,548 975,590 990,625 1003,650 1010,795 1020,755 1040,705 1050,800 1062,790 1072,745 1085,735 1093,708 1100,740 1112,725 1125,745 1140,820 1152,765 1165,770 1178,745 1190,762 1203,740 1215,712 1222,750 1235,735 1250,745 1260,730 1272,782 1282,732 1300,745 1312,740 1330,780 1345,835 1355,880 1366,855 1378,900 1390,890 1403,862 1420,880 1435,865 1450,830 1472,822 1490,832 1512,822 1530,838 1545,845 1550,872 1560,840',
 '0,835 15,845 28,870 40,845 70,832 80,850 88,898 98,845 110,865 130,845 150,835 165,838 177,790 185,800 195,795 208,850 220,880 238,898 250,870 262,880 278,878 280,1020 288,940 298,1030 310,960 323,940 335,970 350,1030 358,1050 365,1078 372,1030 385,1022 397,1030 410,1015 428,960 440,985 455,950 464,868 475,920 490,945 503,945 508,895 516,975 530,925 540,920 553,850 565,880 580,925 590,880 600,870 608,932 620,910 628,880 640,885 650,878 665,888 682,880 693,925 703,905 718,898 730,860 740,830 752,802 762,862 764,700', 0, 5));
$('osc').setAttribute('d', noisy(
 '0,750 20,752 35,730 42,745 60,752 80,728 110,715 135,712 138,722 150,705 172,700 180,685 195,682 203,705 216,714 235,700 250,690 270,683 285,700 305,708 318,732 330,722 340,740 372,737 385,722 412,725 418,690 424,650 435,620 450,605 460,600 470,570 480,560 490,582 500,553 535,547 555,568 568,552 577,572 590,530 598,510 610,503 618,515 630,527 640,515 655,512 665,490 675,495 690,520 708,508 730,530 745,542 775,550 795,570 810,588 835,575 850,583 870,570 905,582 925,593 955,625 968,605 985,630 1008,655 1012,722 1025,690 1042,680 1052,728 1062,722 1075,690 1095,680 1105,700 1125,695 1143,735 1160,710 1180,697 1195,708 1215,685 1235,705 1255,690 1273,717 1285,690 1325,700 1345,735 1360,765 1370,755 1383,777 1400,758 1430,763 1450,743 1475,737 1512,738 1550,752',
 '0,743 30,755 50,742 78,740 90,770 100,748 115,757 130,743 165,742 180,722 192,725 215,765 245,770 255,762 284,768 284,837 290,800 300,832 326,795 345,820 360,852 367,862 380,835 395,842 415,825 430,800 440,817 460,800 466,762 480,785 500,795 508,772 517,808 540,782 553,750 582,780 600,758 610,790 628,768 680,765 696,790 725,767 740,745 753,728 763,742 766,660 770,670', 370, 3));

const env = '0,500.7 40,499 75,498 172,499 180,496 190,495 210,494 270,492.300 375,492.300 400,494 415,496 430,497.300 520,498 550,499 565,501 620,500 650,499 715,500.300 743,502 780,503 810,502.500 833,501 845,504 858,504 880,502.700 910,501.500 940,502 953,500.300';
[['#2020ff', 3.5], ['#ffd000', 2], ['#f01010', 0]].forEach(([c, dy]) => {
  $('env').insertAdjacentHTML('beforeend', `<polyline stroke="${c}" points="${pairs(env).map(([x, y]) => x + ',' + (y + dy)).join(' ')}"/>`);
});

// Tick volume histogram
const vol = pairs('0,50 50,62 95,65 105,74 120,82 160,80 175,68 215,70 250,58 290,70 330,72 370,66 400,70 412,55 418,35 450,50 500,58 560,70 600,52 630,45 670,45 700,60 730,65 800,68 820,78 870,82 900,70 930,65 955,40 1000,58 1015,45 1060,60 1120,55 1180,58 1250,62 1300,58 1340,42 1380,40 1410,60 1440,68 1500,66 1530,78').map(p => left(p, 370))
  .concat(pairs('0,80 60,76 90,65 130,52 170,65 200,70 240,66 280,68 286,35 310,42 330,58 345,48 400,65 424,65 450,52 458,50 460,5 475,35 495,25 530,40 570,60 620,60 665,68 690,82 740,74 755,60 762,70 765,22 770,60').map(p => right(p, 370)));
let v = 0, vd = '';
for (let x = 0; x < 954; x++) {
  while (v < vol.length - 2 && vol[v + 1][0] < x) v++;
  const [x0, y0] = vol[v], [x1, y1] = vol[v + 1];
  let h = 398 - (y0 + (y1 - y0) * Math.min(1, (x - x0) / (x1 - x0)));
  h = Math.max(1, h * (.8 + rnd() * .35));
  if (x === 56) h = 19; if (x === 411) h = 26; if (x === 804) h = 18;
  vd += `M${x} 398v${-h.toFixed(1)}h1v${h.toFixed(1)}z`;
}
$('volume').innerHTML = `<path d="${vd}"/>`;

let g = '';
for (let i = 0; i < 38; i++) { const x = 8.5 + 32 * i; g += `M${x} 92V398M${x} 403V516M${x} 522V669`; }
const ys = [105.5, 138.5, 170.5, 203.5, 235.5, 268.5, 300.5, 333.5, 365.5];
ys.forEach(y => g += `M0 ${y}H1197`);
$('grid').innerHTML = `<path d="${g}"/>`;

let L = '', T = '';
const txt = (x, y, s, a = 'start', c = '') => L += `<text x="${x}" y="${y}" text-anchor="${a}" class="${c}">${s}</text>`;
['0.64700', '0.64530', '0.64360', '0.64190', '0.64020', '0.63850', '0.63680', '0.63510', '0.63340'].forEach((s, i) => { txt(1202, ys[i] + 4, s, 'start', 'small'); T += `M1198 ${ys[i]}h4`; });
L += '<rect x="1200" y="226" width="39" height="11" fill="#778899"/><rect x="1200" y="540" width="31" height="11" fill="#ff0000"/>';
txt(1202, 235, '0.64043', 'start', 'small ink'); txt(1202, 549, '64566', 'start', 'small ink');
txt(1202, 409, '752', 'start', 'small'); txt(1202, 414, '0', 'start', 'small'); txt(1202, 516, '-7918', 'start', 'small'); txt(1202, 528, '64840', 'start', 'small'); txt(1202, 668, '63235', 'start', 'small');
[402, 517, 520, 669].forEach(y => T += `M1198 ${y}.5h3`);
txt(2, 684, '2024', 'start', 'small');
['6 Dec 22:35', '9 Dec 03:55', '9 Dec 09:15', '9 Dec 14:35', '9 Dec 19:55', '10 Dec 01:15', '10 Dec 06:35', '10 Dec 11:55', '10 Dec 17:15', '10 Dec 22:35', '11 Dec 03:55', '11 Dec 09:15', '11 Dec 14:35', '11 Dec 19:55', '12 Dec 01:15'].forEach((s, i) => { txt(40 + 64 * i, 684, s); T += `M${40.5 + 64 * i} 671v4`; });
$('ticks').setAttribute('d', T);
txt(23, 106, 'AUDUSD, M5:  Australian Dollar vs US Dollar');
txt(1174, 106, 'EA торговля спредами - отбой на мартине с ассистентом в две', 'end');
[[374, 'Symbol_One:    Symbol1: AUDUSD Symbol2: USDCAD Magic лонг = 1.0 Magic селл = -1.0'],
 [416, 'Spread0 = -6631.0 spread2 =  -6854.0 тек_зн_спред_куплен = -6644.0    тек_зн_спред_продан =  0.0'],
 [429, 'Spread0 = -6631.0 spread2 =  -6854.0 тек_зн_спред_докуплен = -6606.0 тек_зн_спред_допродан =  0.0'],
 [325, 'CalculateProfit(Magic_buy_spread) = 2.0 CalculateProfit(Magic_sell_spread) = 0.0'],
 [192, 'EquityStart_лонг  = 0.0 EquityStart_шорт  = 0.0'], [43, 'Spread1 = 9'], [158, 'SYMBOL_TRADE_STOPS_LEVEL_1 = 0'],
 [202, 'MINLOT  = 0.01 lots_step = 0.0 MAXLOT  = 500.0'], [124, 'DIGITS  = 5 POINT  = 0.00001'],
 [245, 'LOTSIZE (SYMBOL_TRADE_CONTRACT_SIZE) = 100000.0'],
 [395, 'TICKVALUE (SYMBOL_TRADE_TICK_VALUE) = 1.0 SYMBOL_TRADE_TICK_SIZE  = 0.00001']].forEach(([x, s], i) => txt(x, 120 + 11 * i, s, 'end', i > 8 ? 'large' : ''));
txt(0, 414, 'nd_indicator_light v.2.1 -6657 Env(14) -6931.2370519 -6659.4238342');
txt(0, 533, 'nd_indicator_3_Symb 64051');
$('labels').innerHTML = L;

const mark = ([x, y], sell) => `<g transform="translate(${x.toFixed(0)} ${y.toFixed(0)})"><circle r="7" fill="#92857a"/><path d="M0-5L5 0H2v5h-4V0h-3z" ${sell ? 'transform="rotate(180)"' : ''} fill="${sell ? '#e04020' : '#0a60b8'}" stroke="#fff"/></g>`;
$('marks').innerHTML = pairs('27,805 27,820 150,755 420,720 425,642 449,551 638,375').map(p => mark(left(p, 0))).join('') + mark(left([981, 588], 0), 1)
  + pairs('981,608 1010,769 1051,819 1373,904').map(p => mark(left(p, 0))).join('') + mark(right([285, 1038], 0)) + mark(right([600, 848], 0), 1) + mark(right([603, 880], 0)) + mark(right([766, 688], 0)) + mark(right([771, 670], 0), 1);

$('trades').innerHTML = `2024.12.10 17:55:00|audusd|3136895169|buy|0.12|0.63704|||2024.12.11 20:35:49|0.63747|5.16|0.07 %
2024.12.10 17:55:00|usdcad|3136895172|buy|0.12|1.41789|||2024.12.11 20:35:51|1.41476|-26.55|-0.22 %
2024.12.11 09:10:00|audusd|3138723209|buy|0.29|0.63469|||2024.12.11 20:35:53|0.63746|80.33|0.44 %
2024.12.11 09:10:00|usdcad|3138723221|buy|0.29|1.41784|||2024.12.11 20:35:53|1.41483|-61.70|-0.21 %
2024.12.06 20:07:45|eurchf|3128118043|buy|1|0.92757|||2024.12.11 20:35:54|0.92833|85.93|0.08 %
2024.12.11 20:40:00|audusd|3141640097|buy|0.01|0.63744|||2024.12.12 02:46:41|0.64061|3.17|0.50 %
2024.12.12 02:35:00|audusd|3142155292|buy|0.01|0.64085|||2024.12.12 02:46:42|0.64060|-0.25|-0.04 %
2024.12.11 20:40:00|usdcad|3141640101|buy|0.01|1.41506|||2024.12.12 02:46:42|1.41414|-0.65|-0.07 %
2024.12.12 02:35:00|usdcad|3142155296|buy|0.01|1.41413|||2024.12.12 02:46:45|1.41415|0.01|0.00 %`.split('\n').map(r => '<tr>' + r.split('|').map((c, i) => `<td${i > 9 ? ` class="${c[0] === '-' ? 'neg' : 'pos'}"` : ''}>${i ? '' : '<i class="doc"></i>'}${c}</td>`).join('') + '</tr>').join('');

const cols = [117, 53, 53, 86, 65, 80, 80, 97, 112, 61, 61, 53, 53, 132].map(w => `<col style="width:${w}px">`).join('');
$('cols').innerHTML = $('cols2').innerHTML = cols;
const st = 'старт: EA торговля спредами';
$('deals').innerHTML = `10 23:00:02|3098563084|CADCHF|sell|in|1|0.62290|3137507804|0.00|0.00|13 624.51
10 23:51:45|3098583246|CADCHF|sell|in|1|0.62262|3137779868|0.00|0.00|13 624.51
11 00:01:10|3098593693|CADCHF|buy|out|1|0.62342|3137789979|-1.36|-48.73|13 574.42|[sl 0.62342]
11 00:01:28|3098593947|CADCHF|buy|out|1|0.62362|3137790217|-1.36|-113.33|13 459.73|[sl 0.62362]
11 09:10:00|3099530142|AUDUSD|buy|in|0.29|0.63469|3138723209|0.00|0.00|13 459.73|усреднение spread в buy 1
11 09:10:00|3099530153|USDCAD|buy|in|0.29|1.41784|3138723221|0.00|0.00|13 459.73|Rev.усредн_лонг_Sym_2
11 20:35:44|3102402737|AUDUSD|sell|out|0.01|0.63746|3141630026|0.06|-4.72|13 455.07
11 20:35:45|3102402806|USDCAD|sell|out|0.01|1.41481|3141630096|-0.01|-2.06|13 453.00
11 20:35:45|3102402853|AUDUSD|sell|out|0.02|0.63746|3141630143|0.13|-3.86|13 449.27
11 20:35:46|3102402906|USDCAD|sell|out|0.02|1.41481|3141630196|-0.01|-5.34|13 443.92
11 20:35:47|3102402933|EURCHF|sell|out|0.04|0.92833|3141630223|0.00|-3.93|13 439.99
11 20:35:47|3102402968|EURCHF|sell|out|0.04|0.92834|3141630256|0.00|6.87|13 446.86
11 20:35:48|3102402977|AUDUSD|sell|out|0.05|0.63746|3141630265|0.32|-5.10|13 442.08
11 20:35:48|3102402990|USDCAD|sell|out|0.05|1.41479|3141630280|-0.03|-12.58|13 429.47
11 20:35:49|3102403015|AUDUSD|sell|out|0.12|0.63747|3141630303|0.76|5.16|13 435.39
11 20:35:51|3102403052|USDCAD|sell|out|0.12|1.41476|3141630340|-0.07|-26.55|13 408.77
11 20:35:53|3102403105|AUDUSD|sell|out|0.29|0.63746|3141630392|0.00|80.33|13 489.10
11 20:35:53|3102403118|USDCAD|sell|out|0.29|1.41483|3141630406|0.00|-61.70|13 427.40
11 20:35:54|3102403137|EURCHF|sell|out|1|0.92833|3141630424|0.33|85.93|13 513.66
11 20:40:00|3102412814|AUDUSD|buy|in|0.01|0.63744|3141640097|0.00|0.00|13 513.66|${st}
11 20:40:00|3102412818|USDCAD|buy|in|0.01|1.41506|3141640101|0.00|0.00|13 513.66|${st}
12 02:35:00|3102931238|AUDUSD|buy|in|0.01|0.64085|3142155292|0.00|0.00|13 513.66|докупка spread в buy 1
12 02:35:00|3102931242|USDCAD|buy|in|0.01|1.41413|3142155296|0.00|0.00|13 513.66|Rev.докупка_лонг_Sym_2
12 02:46:41|3102944777|AUDUSD|sell|out|0.01|0.64061|3142168714|0.19|3.17|13 517.02
12 02:46:42|3102944787|AUDUSD|sell|out|0.01|0.64060|3142168725|0.00|-0.25|13 516.77
12 02:46:42|3102944813|USDCAD|sell|out|0.01|1.41414|3142168753|-0.02|-0.65|13 516.10
12 02:46:45|3102944858|USDCAD|sell|out|0.01|1.41415|3142168799|0.00|0.01|13 516.11`.split('\n').map(r => {
  const c = r.split('|'); c[0] = '2024.12.' + c[0]; c.splice(8, 0, '0.00', '0.00'); if (c.length < 14) c.push('');
  return '<tr><td>' + c.join('</td><td>') + '</td></tr>';
}).join('');

$('results').innerHTML = `Чистая прибыль:|1 172.40|Общая прибыль:|2 110.02|Общий убыток:|-937.62
Прибыльность:|2.25|Матожидание выигрыша:|10.66||
Фактор восстановления:|5.16|Коэффициент Шарпа:|0.12||
-
Просадка баланса:|||||
Абсолютная просадка по балансу:|46.10|Максимальная просадка по балансу:|227.39 (1.72%)|Относительная просадка по балансу:|1.72% (227.39)
-
Всего трейдов:|110|Короткие трейды (% выигравших):|3 (33.33%)|Длинные трейды (% выигравших):|107 (51.40%)
||Прибыльные трейды (% от всех):|56 (50.91%)|Убыточные трейды (% от всех):|54 (49.09%)
||Самый большой прибыльный трейд:|644.80|Самый большой убыточный трейд:|-133.97
||Средний прибыльный трейд:|37.68|Средний убыточный трейд:|-17.36
||Максимальное количество непрерывных выигрышей (прибыль):|10 (56.78)|Максимальное количество непрерывных проигрышей (убыток):|8 (-135.73)
||Макс. непрерывная прибыль (число выигрышей):|666.03 (4)|Макс. непрерывный убыток (число проигрышей):|-184.52 (7)
||Средний непрерывный выигрыш:|3|Средний непрерывный проигрыш:|3`.split('\n').map(r => r === '-' ? '<tr class="gap"><td colspan="7"></td></tr>' : '<tr>' + r.split('|').map((c, i) => i % 2 ? `<th>${c}</th>` : `<td>${c}</td>`).join('') + '<td></td></tr>').join('');

let bg = '', bl = '';
['13611', '13335', '13059', '12783', '12507', '12231'].forEach((s, i) => { const y = 661.5 + 25.6 * i; if (i < 5) bg += `M1838 ${y}H2453`; bl += `<text x="2457" y="${y + 4}">${s}</text>`; });
'0 5 10 14 19 23 28 32 37 41 46 50 55 59 64 68 73 77 82 87 91 96 100 105 109'.split(' ').forEach((s, i) => { const x = 1837 + 25.6 * i; if (i) bg += `M${x} 647V789`; bl += `<text x="${i ? x - 1 : 1839}" y="799" text-anchor="middle">${s}</text>`; });
$('bgrid').innerHTML = `<path d="${bg}"/>`;
$('blabels').innerHTML = bl;

// Pixelated favicons in the tab strip
const G = '0a8040';
const m1 = `64,${G} 79,303838 95,5a4510 111,${G} 143,46300c 158,3a3a10 205,20302a 221,282a25 252,${G} 268,303838 284,b02018 299,f0c0c0 331,46300c 346,3a3a10 394,20302a 410,282a25 441,${G} 457,2f3838 473,46300c 488,${G} 520,501010 535,901010 582,901010 613,501010 629,903030 644,601a15 660,802020 676,${G} 707,46300c 723,3a3a10 770,304540 786,334038 817,${G} 833,405055 848,6b5a30 864,${G} 895,6b5030 911,605a35 958,506560 974,5a6065 1005,${G} 1021,6b7078 1036,8a7850 1052,${G} 1083,958880 1099,9a9088 1146,304050 1162,606068 1193,485a68 1209,4f6068 1224,a89068 1240,${G} 1272,a89068 1287,98986b 1334,78887f 1350,88988f 1381,f0f0f0 1413,98a868 1428,98a860 1460,c0b0a8 1475,d8d0c8 1522,e0d8d8`;
const m2 = '0,f0e8e4 45,d8d0c8 75,987888 90,b8a0d8 135,b8a0d8 181,d8c8e8 195,a89890 225,c8b0e0 255,b0a090 270,d0c8c0 315,d8d0c8 361,e8e0e0 405,d0c8c0 435,888070 450,b0a8a0 495,c8c0b8 540,e8e4e0 585,c8c8c8 615,787068 630,b0b0a8 675,c0c0c0 705,dddddd 720,ffffff 735,dddddd 750,bbbbbb 765,aaaaaa 780,cccccc 900,8a7868';
const cell = (x, c) => `<rect x="${x.toFixed(0)}" y="23" width="10" height="10" fill="#${c}"/><rect x="${x.toFixed(0)}" y="33" width="10" height="10" fill="#${c}" opacity=".45"/>`;
let m = m1.split(' ').map(s => s.split(',')).map(([x, c]) => cell(1240 + x / 1.568, c)).join('') + m2.split(' ').map(s => s.split(',')).map(([x, c]) => cell(2240 + x / 1.4976, c)).join('');
m += '<rect x="2711" y="17" width="30" height="26" fill="#fff" opacity=".75"/><rect x="2711" y="43" width="20" height="10" fill="#aaa29c"/>';
for (let x = 1275; x < 2015; x += 10) m += `<rect x="${x}" y="53" width="10" height="7" fill="${['#fff', '#f2f2f2', '#e6e6e6', '#fafafa'][Math.floor(rnd() * 4)]}"/>`;
for (let x = 2800; x < 2995; x += 10) m += `<rect x="${x}" y="53" width="10" height="7" fill="${rnd() > .3 ? '#fff' : '#eee'}"/>`;
$('mosaic').insertAdjacentHTML('beforeend', m);
```
